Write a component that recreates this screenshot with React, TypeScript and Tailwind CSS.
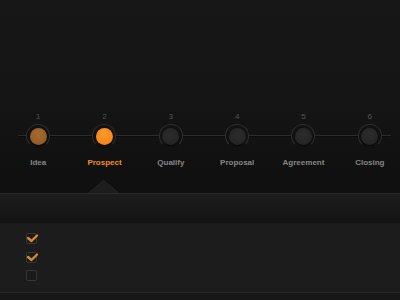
const steps = [
  { n: 1, label: "Idea", state: "done" },
  { n: 2, label: "Prospect", state: "active" },
  { n: 3, label: "Qualify", state: "todo" },
  { n: 4, label: "Proposal", state: "todo" },
  { n: 5, label: "Agreement", state: "todo" },
  { n: 6, label: "Closing", state: "todo" },
];

const tasks = [true, true, false];

function Dot({ state }: { state: string }) {
  if (state === "active") {
    return <div className="w-[17px] h-[17px] rounded-full bg-[radial-gradient(circle_at_50%_35%,#ff9a2a,#f07f10)] shadow-[0_1px_1px_rgba(0,0,0,0.6)]" />;
  }
  if (state === "done") {
    return <div className="w-[17px] h-[17px] rounded-full bg-[radial-gradient(circle_at_50%_35%,#a86b2e,#8a5524)] shadow-[0_1px_1px_rgba(0,0,0,0.6)]" />;
  }
  return <div className="w-[17px] h-[17px] rounded-full bg-[radial-gradient(circle_at_50%_40%,#2c2c2c,#222222)] shadow-[0_1px_1px_rgba(0,0,0,0.6)]" />;
}

function Checkbox({ checked }: { checked: boolean }) {
  return (
    <div className="relative w-[11px] h-[11px] rounded-[2px] border border-[#363636] bg-[#1a1a1a]">
      {checked && (
        <svg width="13" height="11" viewBox="0 0 13 11" className="absolute -left-[1px] -top-[1px]">
          <polyline points="2,5 5.5,8 11,2.5" fill="none" stroke="#d58b2b" strokeWidth="2.4" strokeLinecap="round" strokeLinejoin="round" />
        </svg>
      )}
    </div>
  );
}

export default function App() {
  return (
    <div className="w-[400px] h-[300px] flex flex-col bg-[#161616] overflow-hidden" style={{ fontFamily: '"Liberation Sans", Arial, sans-serif' }}>
      <section className="h-[193px] flex flex-col bg-gradient-to-b from-[#171717] via-[#151515] to-[#0f0f0f]">
        <div className="relative ml-[5px] w-[398px] mt-[112px] grid grid-cols-6">
          <div className="absolute left-[13px] w-[373px] top-[23px] h-[2px] border-t border-[#2b2b2b] border-b border-b-[#0b0b0b]" />
          {steps.map((s) => (
            <div key={s.n} className="relative flex flex-col items-center">
              <span className="text-[8px] leading-[10px] text-[#555555]">{s.n}</span>
              <div className="mt-[2px] w-[24px] h-[24px] rounded-full bg-[#111111] border border-[#2e2e2e] border-b-transparent flex items-center justify-center">
                <Dot state={s.state} />
              </div>
              <span
                className={
                  s.state === "active"
                    ? "mt-[10px] text-[8px] leading-[10px] font-bold text-[#f28d1f]"
                    : "mt-[10px] text-[8px] leading-[10px] font-bold text-[#868686]"
                }
              >
                {s.label}
              </span>
            </div>
          ))}
        </div>
        <div className="mt-auto ml-[88px] h-[13px] w-[31px]">
          <svg width="31" height="14" viewBox="0 0 31 14">
            <polygon points="0,14 15.5,1 31,14" fill="#1d1d1d" />
            <polyline points="0,13.5 15.5,0.5 31,13.5" fill="none" stroke="#282828" strokeWidth="1" />
          </svg>
        </div>
      </section>
      <div className="h-[30px] border-t border-[#2a2a2a] bg-gradient-to-b from-[#1d1d1d] to-[#131313]" />
      <section className="h-[69px] bg-[#1c1c1c] pt-[10px] pl-[26px] flex flex-col gap-[7.5px]">
        {tasks.map((c, i) => (
          <Checkbox key={i} checked={c} />
        ))}
      </section>
      <div className="flex-1 border-t border-[#272727] bg-[#171717]" />
    </div>
  );
}
